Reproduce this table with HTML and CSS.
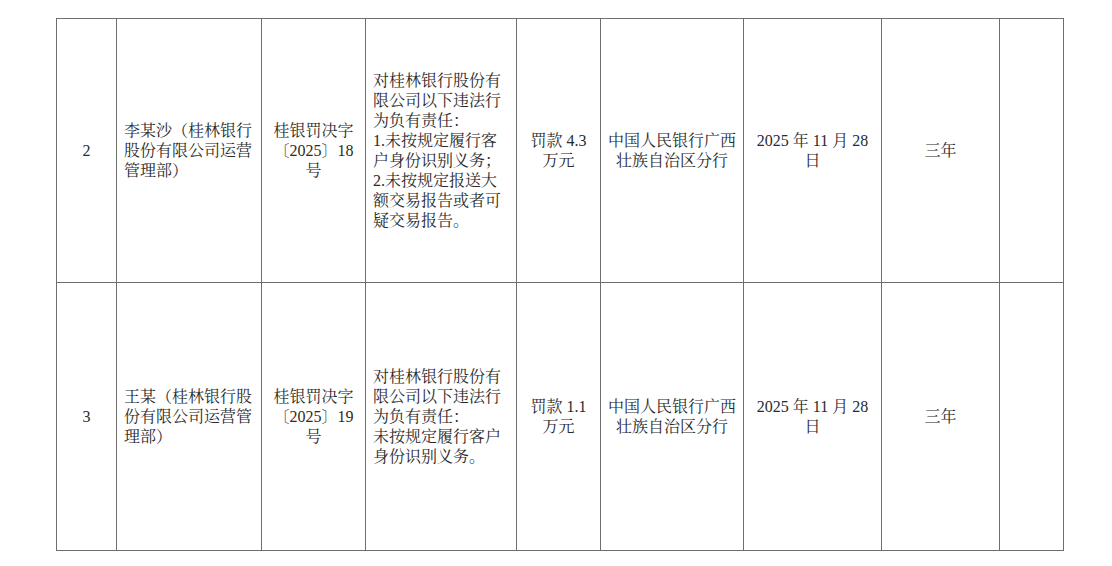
FILE: index.html
```html
<!DOCTYPE html>
<html lang="zh-CN">
<head>
<meta charset="utf-8">
<title>行政处罚信息</title>
<link rel="stylesheet" href="styles.css">
</head>
<body>
<table class="penalty">
  <colgroup>
    <col class="c1"><col class="c2"><col class="c3"><col class="c4"><col class="c5"><col class="c6"><col class="c7"><col class="c8"><col class="c9">
  </colgroup>
  <tbody>
    <tr class="row-a">
      <td class="center">2</td>
      <td>李某沙（桂林银行<br>股份有限公司运营<br>管理部）</td>
      <td class="center">桂银罚决字<br>〔2025〕18<br>号</td>
      <td>对桂林银行股份有<br>限公司以下违法行<br>为负有责任：<br>1.未按规定履行客<br>户身份识别义务；<br>2.未按规定报送大<br>额交易报告或者可<br>疑交易报告。</td>
      <td class="center">罚款 4.3<br>万元</td>
      <td class="center">中国人民银行广西<br>壮族自治区分行</td>
      <td class="center">2025 年 11 月 28<br>日</td>
      <td class="center">三年</td>
      <td></td>
    </tr>
    <tr class="row-b">
      <td class="center">3</td>
      <td>王某（桂林银行股<br>份有限公司运营管<br>理部）</td>
      <td class="center">桂银罚决字<br>〔2025〕19<br>号</td>
      <td>对桂林银行股份有<br>限公司以下违法行<br>为负有责任：<br>未按规定履行客户<br>身份识别义务。</td>
      <td class="center">罚款 1.1<br>万元</td>
      <td class="center">中国人民银行广西<br>壮族自治区分行</td>
      <td class="center">2025 年 11 月 28<br>日</td>
      <td class="center">三年</td>
      <td></td>
    </tr>
  </tbody>
</table>
</body>
</html>
```

FILE: styles.css
```css
html, body {
  margin: 0;
  padding: 0;
  background: #ffffff;
}

body {
  padding: 18px 0 0 56px;
  font-family: "Liberation Serif", "Noto Serif CJK SC", "Noto Sans CJK SC", serif;
  color: #2a2a2a;
}

.penalty {
  border-collapse: collapse;
  table-layout: fixed;
  width: 1007px;
  font-size: 16px;
  line-height: 20px;
}

.c1 { width: 60px; }
.c2 { width: 145px; }
.c3 { width: 104px; }
.c4 { width: 151px; }
.c5 { width: 84px; }
.c6 { width: 143px; }
.c7 { width: 138px; }
.c8 { width: 118px; }
.c9 { width: 64px; }

.penalty td {
  border: 1px solid #6e6e6e;
  padding: 0 4px 0 7px;
  vertical-align: middle;
  text-align: left;
  white-space: nowrap;
  overflow: hidden;
}

.penalty td.center {
  text-align: center;
  padding: 0 2px;
}

.row-a { height: 264px; }
.row-b { height: 268px; }
```
